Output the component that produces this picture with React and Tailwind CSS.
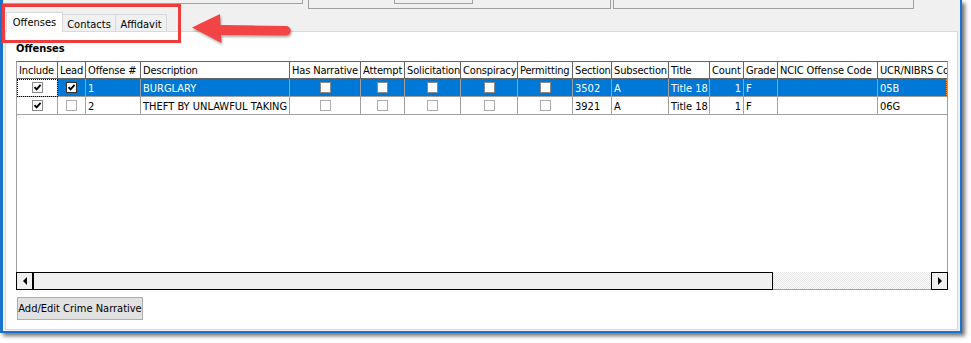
import React from 'react';

const columns = [
    { label: 'Include', w: 'w-[41px]', check: true },
    { label: 'Lead', w: 'w-[28px]', check: true },
    { label: 'Offense #', w: 'w-[55px]' },
    { label: 'Description', w: 'w-[149px]' },
    { label: 'Has Narrative', w: 'w-[71px]', check: true },
    { label: 'Attempt', w: 'w-[44px]', check: true },
    { label: 'Solicitation', w: 'w-[56px]', check: true },
    { label: 'Conspiracy', w: 'w-[57px]', check: true },
    { label: 'Permitting', w: 'w-[55px]', check: true },
    { label: 'Section', w: 'w-[39px]' },
    { label: 'Subsection', w: 'w-[57px]' },
    { label: 'Title', w: 'w-[41px]' },
    { label: 'Count', w: 'w-[34px]', right: true },
    { label: 'Grade', w: 'w-[34px]' },
    { label: 'NCIC Offense Code', w: 'w-[100px]' },
    { label: 'UCR/NIBRS Code', w: 'w-[100px]' },
];

const rows = [
    {
        selected: true,
        values: [true, true, '1', 'BURGLARY', false, false, false, false, false, '3502', 'A', 'Title 18', '1', 'F', '', '05B'],
    },
    {
        selected: false,
        values: [true, false, '2', 'THEFT BY UNLAWFUL TAKING', false, false, false, false, false, '3921', 'A', 'Title 18', '1', 'F', '', '06G'],
    },
];

const CheckBox = ({ checked, border }) => (
    <span className={`w-[11px] h-[11px] bg-white border ${border} flex items-center justify-center`}>
        {checked && (
            <svg width="9" height="9" viewBox="0 0 9 9">
                <path d="M1.5 4.2 L3.6 6.4 L7.6 1.8" stroke="#000" strokeWidth="1.9" fill="none" />
            </svg>
        )}
    </span>
);

const Tab = ({ label, active, w }) =>
    active ? (
        <div className={`${w} h-[20px] -mb-px relative z-10 bg-white border-x border-t border-[#d9d9d9] pt-[3px] leading-[14px] text-center`}>
            {label}
        </div>
    ) : (
        <div className={`${w} h-[17px] bg-[#f0f0f0] border-t border-r border-[#d9d9d9] pt-[3px] leading-[14px] text-center`}>
            {label}
        </div>
    );

const App = () => {
    return (
        <div className="w-[971px] h-[343px] bg-white relative overflow-hidden text-[11px] text-black font-['DejaVu_Sans_Condensed','DejaVu_Sans',sans-serif]">
            <div className="w-[962px] h-[333px] flex flex-col bg-[#f0f0f0] border-l-[3px] border-r-2 border-b-2 border-[#1a72cf] shadow-[3px_3px_4px_rgba(0,0,0,0.55)]">
                {/* cropped toolbar boxes */}
                <div className="h-[10px] flex items-start">
                    <div className="w-[300px] h-[4px] border-r border-b border-[#a0a0a0]" />
                    <div className="ml-[5px] w-[303px] h-[9px] border-x border-b border-[#a0a0a0] flex items-start">
                        <div className="ml-[85px] w-[79px] h-[4px] border-x border-b border-[#a0a0a0]" />
                    </div>
                    <div className="ml-[2px] w-[301px] h-[9px] border-x border-b border-[#a0a0a0]" />
                </div>

                <div className="h-[21px] flex items-end pl-[3px]">
                    <Tab label="Offenses" active w="w-[57px]" />
                    <Tab label="Contacts" w="w-[53px]" />
                    <Tab label="Affidavit" w="w-[51px]" />
                </div>

                <div className="mx-[2px] h-[299px] bg-white border border-[#d9d9d9] pl-[10px] flex flex-col">
                    <div className="mt-[10px] h-[14px] leading-[14px] font-bold">Offenses</div>

                    <div className="mt-[5px] w-[932px] flex flex-col">
                        <div className="relative h-[211px] border-x border-[#a0a0a0] border-t border-t-[#646464] overflow-hidden">
                            <div className="flex tracking-[-0.15px]">
                                {columns.map((c) => (
                                    <div
                                        key={c.label}
                                        className={`${c.w} shrink-0 h-[17px] border-b border-r border-[#646464] pl-[2px] pt-px leading-[16px] whitespace-nowrap overflow-hidden`}
                                    >
                                        {c.label}
                                    </div>
                                ))}
                            </div>
                            {rows.map((r, ri) => (
                                <div key={ri} className="flex">
                                    {columns.map((c, i) => {
                                        const v = r.values[i];
                                        const focus = r.selected && i === 0;
                                        const blue = r.selected && i > 0;
                                        return (
                                            <div
                                                key={c.label}
                                                className={`${c.w} shrink-0 h-[18px] border-b border-r border-[#a0a0a0] px-[2px] whitespace-nowrap overflow-hidden flex ${
                                                    c.check
                                                        ? 'items-center justify-center'
                                                        : c.right
                                                        ? 'items-start justify-end pt-px leading-[17px]'
                                                        : 'items-start pt-px leading-[17px]'
                                                } ${blue ? 'bg-[#0078d7] text-white' : 'bg-white'} ${
                                                    focus ? 'outline-1 outline-dotted outline-black -outline-offset-1' : ''
                                                }`}
                                            >
                                                {c.check ? (
                                                    <CheckBox
                                                        checked={v}
                                                        border={
                                                            i === 1 && v
                                                                ? 'border-[#333333]'
                                                                : blue || v
                                                                ? 'border-[#8a8a8a]'
                                                                : 'border-[#adadad]'
                                                        }
                                                    />
                                                ) : (
                                                    v
                                                )}
                                            </div>
                                        );
                                    })}
                                </div>
                            ))}
                            <div className="absolute right-0 top-[17px] h-[18px] w-px border-r border-dotted border-[#ff8a28]" />
                        </div>

                        {/* horizontal scrollbar */}
                        <div className="flex h-[18px]">
                            <div className="w-[18px] h-full border border-r-2 border-black bg-[#f0f0f0] flex items-center justify-center">
                                <span className="w-0 h-0 border-y-[4px] border-y-transparent border-r-[4px] border-r-black" />
                            </div>
                            <div className="w-[739px] h-full border-y border-r border-black bg-[#f0f0f0]" />
                            <div className="flex-1 h-full border-b border-[#a0a0a0] bg-[image:repeating-conic-gradient(#e6e6e6_0%_25%,#ffffff_0%_50%)] bg-[length:2px_2px]" />
                            <div className="w-[17px] h-full border border-black bg-[#f0f0f0] flex items-center justify-center">
                                <span className="w-0 h-0 border-y-[4px] border-y-transparent border-l-[4px] border-l-black" />
                            </div>
                        </div>
                    </div>

                    <button className="mt-[7px] ml-px w-[126px] h-[23px] bg-[#e1e1e1] border border-[#adadad] leading-[21px] text-center">
                        Add/Edit Crime Narrative
                    </button>
                </div>
            </div>

            {/* annotation: red highlight box and arrow */}
            <div className="absolute left-[2px] top-[4px] w-[179px] h-[39px] border-[3px] border-[#ef3b3b]" />
            <svg
                className="absolute left-[185px] top-[8px] drop-shadow-[1px_2px_1px_rgba(0,0,0,0.3)]"
                width="110"
                height="40"
                viewBox="0 0 110 40"
            >
                <path
                    d="M7 19.5 L35 6 L35.5 17 L101 18 A4.8 4.8 0 0 1 101 27.6 L36 27 L36.5 35 Z"
                    fill="#f24444"
                />
            </svg>
        </div>
    );
};

export default App;
